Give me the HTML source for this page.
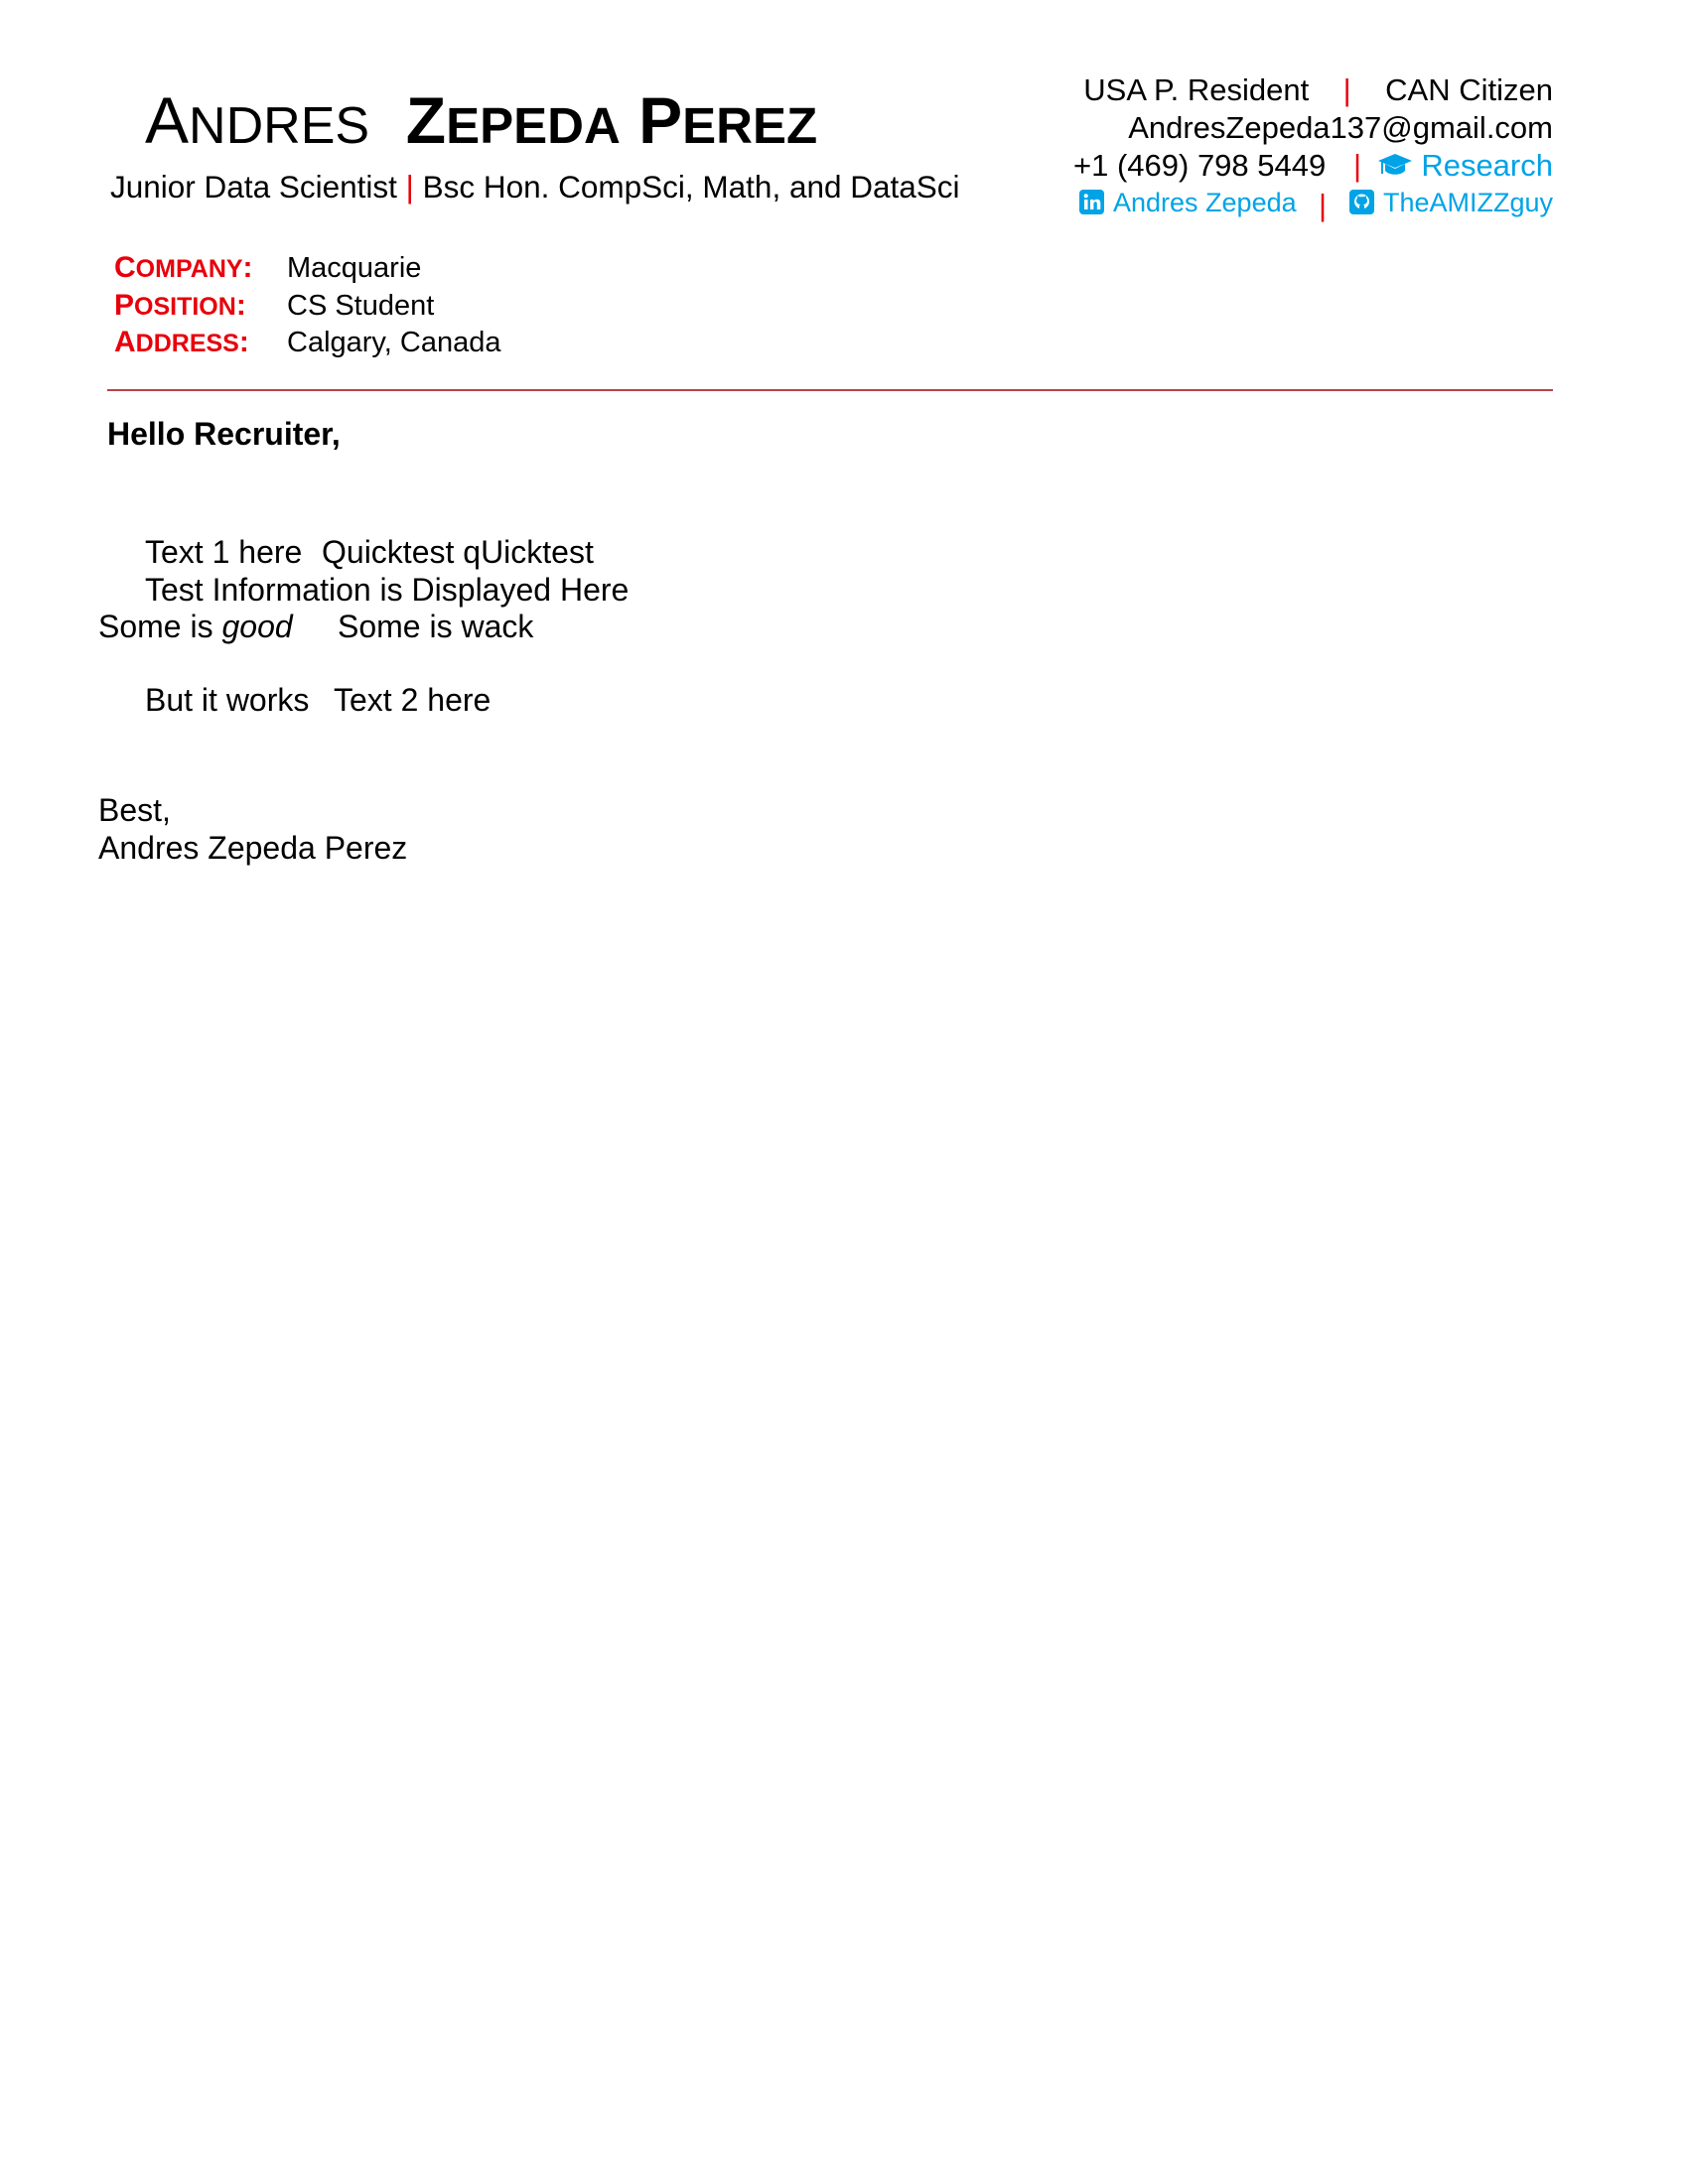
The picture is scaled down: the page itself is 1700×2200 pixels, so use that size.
<!DOCTYPE html>
<html><head><meta charset="utf-8"><style>
body{margin:0;width:1700px;height:2200px;background:#fff;position:relative;font-family:"Liberation Sans","DejaVu Sans",sans-serif;color:#000;overflow:hidden}
.a{position:absolute;white-space:nowrap;line-height:1}
.r{color:#e8000b}
.c{color:#00a3e6}
.lab{color:#e8000b;font-weight:bold}
</style></head><body>
<div class="a" style="left:146px;top:88px;font-size:66px;">A<span style="font-size:52px">NDRES</span>&nbsp; <b>Z<span style="font-size:51px">EPEDA</span> P<span style="font-size:51px">EREZ</span></b></div>
<div class="a" style="left:111px;top:173px;font-size:31.5px;">Junior Data Scientist <span class="r">|</span> Bsc Hon. CompSci, Math, and DataSci</div>

<div class="a" style="right:136px;top:75px;font-size:31px;">USA P. Resident &nbsp;&nbsp;&nbsp;<span class="r">|</span>&nbsp;&nbsp;&nbsp; CAN Citizen</div>
<div class="a" style="right:136px;top:113px;font-size:31px;">AndresZepeda137@gmail.com</div>
<div class="a" style="left:1081px;top:151px;font-size:31px;">+1 (469) 798 5449</div>
<div class="a r" style="left:1363px;top:151px;font-size:31px;">|</div>
<div class="a c" style="right:136px;top:151px;font-size:31px;"><svg width="36" height="26" viewBox="0 0 36 26" style="vertical-align:-2px;margin-right:8px"><path d="M18 2 L35 9 L18 16 L1 9Z" fill="#00a3e6"/><path d="M8 12 V19 C12 24 24 24 28 19 V12 L18 17Z" fill="#00a3e6"/><rect x="4" y="10" width="2" height="12" fill="#00a3e6"/></svg>Research</div>
<div class="a c" style="left:1087px;top:191px;font-size:27px;"><svg width="25" height="25" viewBox="0 0 25 25" style="vertical-align:-3px;margin-right:9px"><rect width="25" height="25" rx="4" fill="#00a3e6"/><rect x="5" y="10" width="3.5" height="10" fill="#fff"/><circle cx="6.7" cy="6.3" r="2.1" fill="#fff"/><path d="M11 10h3.3v1.5c.8-1.2 2-1.8 3.4-1.8 2.6 0 3.6 1.6 3.6 4.3V20h-3.5v-5.5c0-1.3-.4-2.2-1.6-2.2s-1.8.9-1.8 2.2V20H11z" fill="#fff"/></svg>Andres Zepeda</div>
<div class="a r" style="left:1328px;top:191px;font-size:31px;">|</div>
<div class="a c" style="right:136px;top:191px;font-size:27px;"><svg width="25" height="25" viewBox="0 0 25 25" style="vertical-align:-3px;margin-right:9px"><rect width="25" height="25" rx="4" fill="#00a3e6"/><circle cx="12.5" cy="12" r="7.5" fill="#fff"/><path d="M10 21v-4c0-1 .5-1.8 1-2-2.5-.3-4-1.5-4-4 0-1 .4-1.8 1-2.4-.1-.6-.1-1.5.2-2.2 1 0 1.8.5 2.4 1a7 7 0 0 1 3.8 0c.6-.5 1.4-1 2.4-1 .3.7.3 1.6.2 2.2.6.6 1 1.4 1 2.4 0 2.5-1.5 3.7-4 4 .5.2 1 1 1 2v4z" fill="#00a3e6"/></svg>TheAMIZZguy</div>

<div class="a lab" style="left:115px;top:255px;font-size:30px;">C<span style="font-size:25px">OMPANY</span>:</div>
<div class="a lab" style="left:115px;top:293px;font-size:30px;">P<span style="font-size:25px">OSITION</span>:</div>
<div class="a lab" style="left:115px;top:330px;font-size:30px;">A<span style="font-size:25px">DDRESS</span>:</div>
<div class="a" style="left:289px;top:256px;font-size:29px;">Macquarie</div>
<div class="a" style="left:289px;top:294px;font-size:29px;">CS Student</div>
<div class="a" style="left:289px;top:331px;font-size:29px;">Calgary, Canada</div>

<div style="position:absolute;left:108px;top:392px;width:1456px;height:2px;background:#b5434a"></div>

<div class="a" style="left:108px;top:421px;font-size:32px;font-weight:bold">Hello Recruiter,</div>
<div class="a" style="left:146px;top:540px;font-size:32px;">Text 1 here</div>
<div class="a" style="left:324px;top:540px;font-size:32px;">Quicktest qUicktest</div>
<div class="a" style="left:146px;top:578px;font-size:32px;">Test Information is Displayed Here</div>
<div class="a" style="left:99px;top:615px;font-size:32px;">Some is <i>good</i></div>
<div class="a" style="left:340px;top:615px;font-size:32px;">Some is wack</div>
<div class="a" style="left:146px;top:689px;font-size:32px;">But it works</div>
<div class="a" style="left:336px;top:689px;font-size:32px;">Text 2 here</div>
<div class="a" style="left:99px;top:800px;font-size:32px;">Best,</div>
<div class="a" style="left:99px;top:838px;font-size:32px;">Andres Zepeda Perez</div>
</body></html>
